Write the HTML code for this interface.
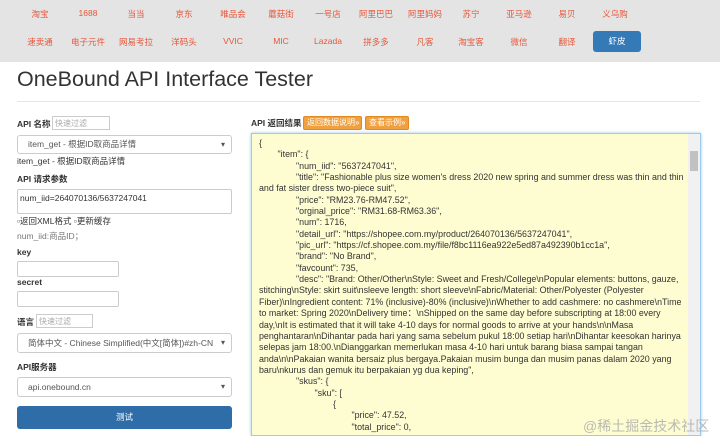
<!DOCTYPE html>
<html><head><meta charset="utf-8"><style>
*{box-sizing:border-box;margin:0;padding:0}
body{width:720px;height:436px;overflow:hidden;background:#fff;font-family:"Liberation Sans","Noto Sans CJK SC",sans-serif;color:#333;position:relative}
.nav{position:absolute;left:0;top:0;width:720px;height:62px;background:#e4e4e4}
.nav span{position:absolute;font-size:8.5px;color:#e8563a;transform:translateX(-50%);white-space:nowrap}
.btnb{position:absolute;left:593px;top:31px;width:48px;height:21px;background:#337ab7;border-radius:3px;color:#fff;font-size:8.5px;text-align:center;line-height:21px}
h1{position:absolute;left:17px;top:67px;font-size:21.5px;font-weight:normal;color:#333}
.hr{position:absolute;left:17px;right:20px;top:101px;border-top:1px solid #e5e5e5}
.a{position:absolute;font-size:8.5px;white-space:nowrap}
.b{font-weight:bold}
.in{position:absolute;border:1px solid #ccc;background:#fff;border-radius:2px}
.sel{position:absolute;left:17px;width:215px;border:1px solid #ccc;border-radius:3px;background:#fff;font-size:8.5px;padding-left:10px;color:#555}
.sel:after{content:"▾";position:absolute;right:6px;font-size:8px;color:#555}
.filt{position:absolute;border:1px solid #ccc;font-size:8px;color:#aaa;padding:1px 2px;height:14px;line-height:11px}
.ob{position:absolute;top:116px;height:14px;background:#f0a040;border:1px solid #e08a20;border-radius:2px;color:#fff;font-size:8px;line-height:12px;padding-left:3px}
.ta{position:absolute;left:251px;top:133px;width:450px;height:303px;background:#fefdd2;border:1px solid #9ecaed;box-shadow:0 0 3px #9ecaed}
.ta pre{position:absolute;left:7px;top:4px;width:428px;font-family:"Liberation Sans",sans-serif;font-size:8.9px;line-height:11.35px;color:#333;white-space:pre-wrap;tab-size:7.5}
.sb{position:absolute;right:0;top:0;width:12px;height:100%;background:#f1f1f1}
.sb i{position:absolute;left:2px;top:17px;width:8px;height:20px;background:#c1c1c1}
</style></head><body>
<div class="nav">
<span style="left:40px;top:8px">淘宝</span><span style="left:88px;top:8px">1688</span><span style="left:136px;top:8px">当当</span><span style="left:184px;top:8px">京东</span><span style="left:233px;top:8px">唯品会</span><span style="left:281px;top:8px">蘑菇街</span><span style="left:328px;top:8px">一号店</span><span style="left:376px;top:8px">阿里巴巴</span><span style="left:425px;top:8px">阿里妈妈</span><span style="left:471px;top:8px">苏宁</span><span style="left:519px;top:8px">亚马逊</span><span style="left:567px;top:8px">易贝</span><span style="left:615px;top:8px">义乌购</span>
<span style="left:40px;top:36px">速卖通</span><span style="left:88px;top:36px">电子元件</span><span style="left:136px;top:36px">网易考拉</span><span style="left:184px;top:36px">洋码头</span><span style="left:233px;top:36px">VVIC</span><span style="left:281px;top:36px">MIC</span><span style="left:328px;top:36px">Lazada</span><span style="left:376px;top:36px">拼多多</span><span style="left:425px;top:36px">凡客</span><span style="left:471px;top:36px">淘宝客</span><span style="left:519px;top:36px">微信</span><span style="left:567px;top:36px">翻译</span>
<div class="btnb">虾皮</div>
</div>
<h1>OneBound API Interface Tester</h1>
<div class="hr"></div>

<div class="a b" style="left:17px;top:118px">API 名称</div>
<div class="filt" style="left:52px;top:116px;width:58px">快速过滤</div>
<div class="sel" style="top:135px;height:19px;line-height:17px">item_get - 根据ID取商品详情</div>
<div class="a" style="left:17px;top:155px">item_get - 根据ID取商品详情</div>
<div class="a b" style="left:17px;top:173px">API 请求参数</div>
<div class="in" style="left:17px;top:189px;width:215px;height:25px;font-size:8.5px;padding:3px 2px">num_iid=264070136/5637247041</div>
<div class="a" style="left:17px;top:215px">▫返回XML格式 ▫更新缓存</div>
<div class="a" style="left:17px;top:230px;color:#777">num_iid:商品ID；</div>
<div class="a b" style="left:17px;top:247px">key</div>
<div class="in" style="left:17px;top:261px;width:102px;height:16px"></div>
<div class="a b" style="left:17px;top:277px">secret</div>
<div class="in" style="left:17px;top:291px;width:102px;height:16px"></div>
<div class="a b" style="left:17px;top:316px">语言</div>
<div class="filt" style="left:36px;top:314px;width:57px">快速过滤</div>
<div class="sel" style="top:333px;height:20px;line-height:18px">简体中文 - Chinese Simplified(中文[简体])#zh-CN</div>
<div class="a b" style="left:17px;top:361px">API服务器</div>
<div class="sel" style="top:377px;height:20px;line-height:18px">api.onebound.cn</div>
<div style="position:absolute;left:17px;top:406px;width:215px;height:23px;background:#2f6da8;border-radius:3px;color:#fff;font-size:8.5px;text-align:center;line-height:23px">测试</div>

<div class="a b" style="left:251px;top:117px">API 返回结果</div>
<div class="ob" style="left:303px;width:59px">返回数据说明»</div>
<div class="ob" style="left:365px;width:44px">查看示例»</div>
<div class="ta"><pre>{
	"item": {
		"num_iid": "5637247041",
		"title": "Fashionable plus size women's dress 2020 new spring and summer dress was thin and thin and fat sister dress two-piece suit",
		"price": "RM23.76-RM47.52",
		"orginal_price": "RM31.68-RM63.36",
		"num": 1716,
		"detail_url": "https://shopee.com.my/product/264070136/5637247041",
		"pic_url": "https://cf.shopee.com.my/file/f8bc1116ea922e5ed87a492390b1cc1a",
		"brand": "No Brand",
		"favcount": 735,
		"desc": "Brand: Other/Other\nStyle: Sweet and Fresh/College\nPopular elements: buttons, gauze, stitching\nStyle: skirt suit\nsleeve length: short sleeve\nFabric/Material: Other/Polyester (Polyester Fiber)\nIngredient content: 71% (inclusive)-80% (inclusive)\nWhether to add cashmere: no cashmere\nTime to market: Spring 2020\nDelivery time：\nShipped on the same day before subscripting at 18:00 every day,\nIt is estimated that it will take 4-10 days for normal goods to arrive at your hands\n\nMasa penghantaran\nDihantar pada hari yang sama sebelum pukul 18:00 setiap hari\nDihantar keesokan harinya selepas jam 18:00.\nDianggarkan memerlukan masa 4-10 hari untuk barang biasa sampai tangan anda\n\nPakaian wanita bersaiz plus bergaya.Pakaian musim bunga dan musim panas dalam 2020 yang baru\nkurus dan gemuk itu berpakaian yg dua keping",
		"skus": {
			"sku": [
				{
					"price": 47.52,
					"total_price": 0,</pre>
<div class="sb"><i></i></div></div>
<div class="a" style="left:583px;top:416px;font-size:14px;color:#aaa;opacity:.8">@稀土掘金技术社区</div>
</body></html>
